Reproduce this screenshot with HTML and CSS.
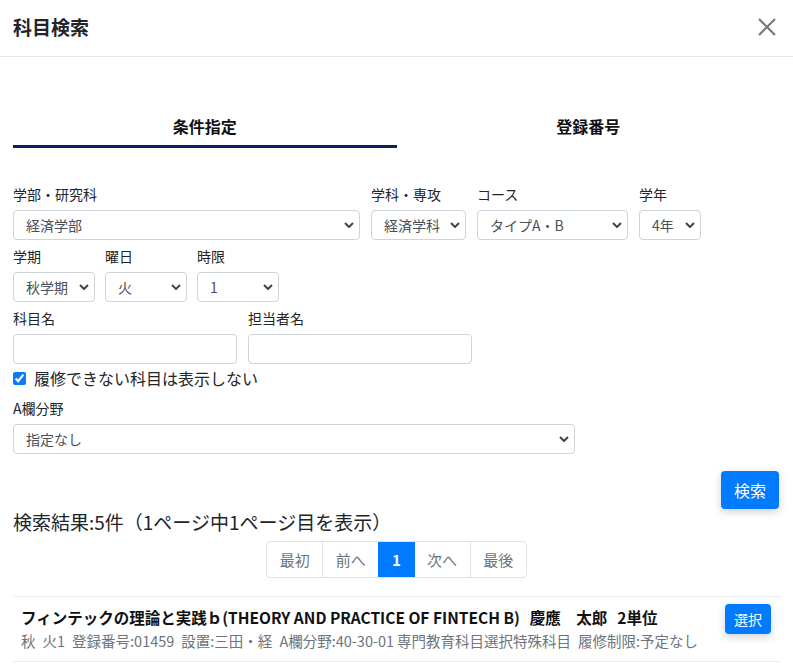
FILE: index.html
```html
<!DOCTYPE html>
<html lang="ja">
<head>
<meta charset="utf-8">
<title>科目検索</title>
<link rel="stylesheet" href="styles.css">
</head>
<body>
<div class="modal">
  <header class="modal-header">
    <h1 class="modal-title">科目検索</h1>
    <button class="close" type="button" aria-label="閉じる">
      <svg width="18" height="18" viewBox="0 0 18 18"><path d="M1 1L17 17M17 1L1 17" stroke="#777" stroke-width="2" fill="none"/></svg>
    </button>
  </header>
  <div class="modal-body">
    <nav class="tabs">
      <div class="tab active">条件指定</div>
      <div class="tab">登録番号</div>
    </nav>

    <div class="form">
      <div class="row gap11">
        <div class="field w347"><label class="lbl">学部・研究科</label><select class="sel"><option>経済学部</option></select></div>
        <div class="field w95"><label class="lbl">学科・専攻</label><select class="sel"><option>経済学科</option></select></div>
        <div class="field w151"><label class="lbl">コース</label><select class="sel"><option>タイプA・B</option></select></div>
        <div class="field w62"><label class="lbl">学年</label><select class="sel"><option>4年</option></select></div>
      </div>
      <div class="row gap10">
        <div class="field w82"><label class="lbl">学期</label><select class="sel"><option>秋学期</option></select></div>
        <div class="field w82"><label class="lbl">曜日</label><select class="sel"><option>火</option></select></div>
        <div class="field w82"><label class="lbl">時限</label><select class="sel"><option>1</option></select></div>
      </div>
      <div class="row gap11">
        <div class="field w224"><label class="lbl">科目名</label><input class="inp" type="text"></div>
        <div class="field w224"><label class="lbl">担当者名</label><input class="inp" type="text"></div>
      </div>
      <label class="check"><input type="checkbox" checked> 履修できない科目は表示しない</label>
      <div class="row">
        <div class="field w562"><label class="lbl">A欄分野</label><select class="sel"><option>指定なし</option></select></div>
      </div>
    </div>

    <div class="actions"><button class="btn btn-search" type="button">検索</button></div>

    <h2 class="result-count">検索結果:5件（1ページ中1ページ目を表示）</h2>

    <div class="pager">
      <ul class="pagination">
        <li class="page">最初</li>
        <li class="page">前へ</li>
        <li class="page current">1</li>
        <li class="page">次へ</li>
        <li class="page">最後</li>
      </ul>
    </div>

    <ul class="results">
      <li class="result">
        <div class="result-info">
          <div class="result-title">フィンテックの理論と実践ｂ(THEORY AND PRACTICE OF FINTECH B)<span class="sp">慶應　太郎</span><span class="sp">2単位</span></div>
          <div class="result-meta"><span>秋</span><span>火1</span><span>登録番号:01459</span><span>設置:三田・経</span><span class="tight">A欄分野:40-30-01</span><span>専門教育科目選択特殊科目</span><span>履修制限:予定なし</span></div>
        </div>
        <button class="btn btn-select" type="button">選択</button>
      </li>
    </ul>
  </div>
</div>
</body>
</html>
```

FILE: styles.css
```css
* { box-sizing: border-box; }
html, body { margin: 0; padding: 0; background: #fff; }
body {
  font-family: "Noto Sans CJK JP", "Noto Sans", sans-serif;
  color: #212529;
  font-size: 14px;
}
.modal { width: 793px; }
.modal-header {
  height: 57px;
  display: flex;
  align-items: center;
  justify-content: space-between;
  padding: 0 13px 2px 13px;
  border-bottom: 1px solid #e5e7ea;
}
.modal-title { margin: 0; font-size: 19px; font-weight: 700; line-height: 28px; }
.close { border: 0; background: none; padding: 0; margin-right: 4px; display: flex; cursor: pointer; }

.modal-body { padding: 0 13px; }

.tabs { display: flex; margin-top: 47px; }
.tab {
  flex: 1;
  text-align: center;
  font-size: 16px;
  font-weight: 700;
  line-height: 24px;
  padding: 10px 0 7px;
  border-bottom: 3px solid transparent;
  color: #111;
}
.tab.active { border-bottom-color: #0b1f5c; }

.form { margin-top: 36px; display: flex; flex-direction: column; }
.row { display: flex; margin-bottom: 6px; }
.gap11 { gap: 11px; }
.gap10 { gap: 10px; }
.field { display: flex; flex-direction: column; }
.w347 { width: 347px; }
.w95 { width: 95px; }
.w151 { width: 151px; }
.w62 { width: 62px; }
.w82 { width: 82px; }
.w224 { width: 224px; }
.w562 { width: 562px; }
.lbl { font-size: 14px; line-height: 21px; margin-bottom: 5px; }

.sel, .inp {
  height: 30px;
  border: 1px solid #ced4da;
  border-radius: 4px;
  background-color: #fff;
  font-family: inherit;
  font-size: 14px;
  color: #495057;
  padding: 0 22px 0 12px;
  width: 100%;
  outline: none;
}
.sel {
  -webkit-appearance: none;
  appearance: none;
  background-image: url("data:image/svg+xml,%3csvg xmlns='http://www.w3.org/2000/svg' viewBox='0 0 10 6'%3e%3cpath fill='none' stroke='%23444' stroke-width='2' d='M1 1l4 4 4-4'/%3e%3c/svg%3e");
  background-repeat: no-repeat;
  background-position: right 5px center;
  background-size: 10px 6px;
}
.inp { padding: 0 8px; }

.check {
  display: flex;
  align-items: center;
  font-size: 16px;
  line-height: 24px;
  margin-top: -4px;
  margin-bottom: 8px;
}
.check input { margin: 0 8px 0 0; width: 13px; height: 13px; accent-color: #0a7cf5; }

.actions { display: flex; justify-content: flex-end; margin-top: 11px; }
.btn {
  border: 0;
  border-radius: 4px;
  background: #007bff;
  color: #fff;
  font-family: inherit;
  cursor: pointer;
  box-shadow: 0 3px 8px rgba(0,0,0,0.18);
}
.btn-search { height: 38px; padding: 0 13px; font-size: 16px; margin-right: 1px; }

.result-count {
  margin: -1px 0 0;
  font-size: 19px;
  font-weight: 400;
  line-height: 28px;
}

.pager { display: flex; justify-content: center; margin-top: 5px; }
.pagination {
  display: flex;
  list-style: none;
  margin: 0;
  padding: 0;
  border: 1px solid #dee2e6;
  border-radius: 4px;
  overflow: hidden;
}
.page {
  height: 35px;
  line-height: 35px;
  padding: 0 12.6px;
  font-size: 15px;
  color: #6c757d;
  border-left: 1px solid #dee2e6;
}
.page:first-child { border-left: 0; }
.page.current { background: #007bff; color: #fff; font-weight: 700; border-left-color: #007bff; }
.page.current + .page { border-left-color: #007bff; }

.results { list-style: none; margin: 18px 0 0; padding: 0; }
.result {
  display: flex;
  justify-content: space-between;
  align-items: flex-start;
  border-top: 1px solid #e9ecef;
  border-bottom: 1px solid #e9ecef;
  padding: 7px 9px 9px 8px;
}
.result-title { font-size: 15.5px; font-weight: 700; line-height: 26px; color: #111; white-space: nowrap; }
.sp { margin-left: 10px; }
.result-meta { font-size: 14.5px; line-height: 22px; color: #6c757d; white-space: nowrap; }
.result-meta span { margin-right: 7px; }
.result-meta span.tight { margin-right: 3px; }
.btn-select { height: 30px; padding: 0 9px; font-size: 14px; }
```
